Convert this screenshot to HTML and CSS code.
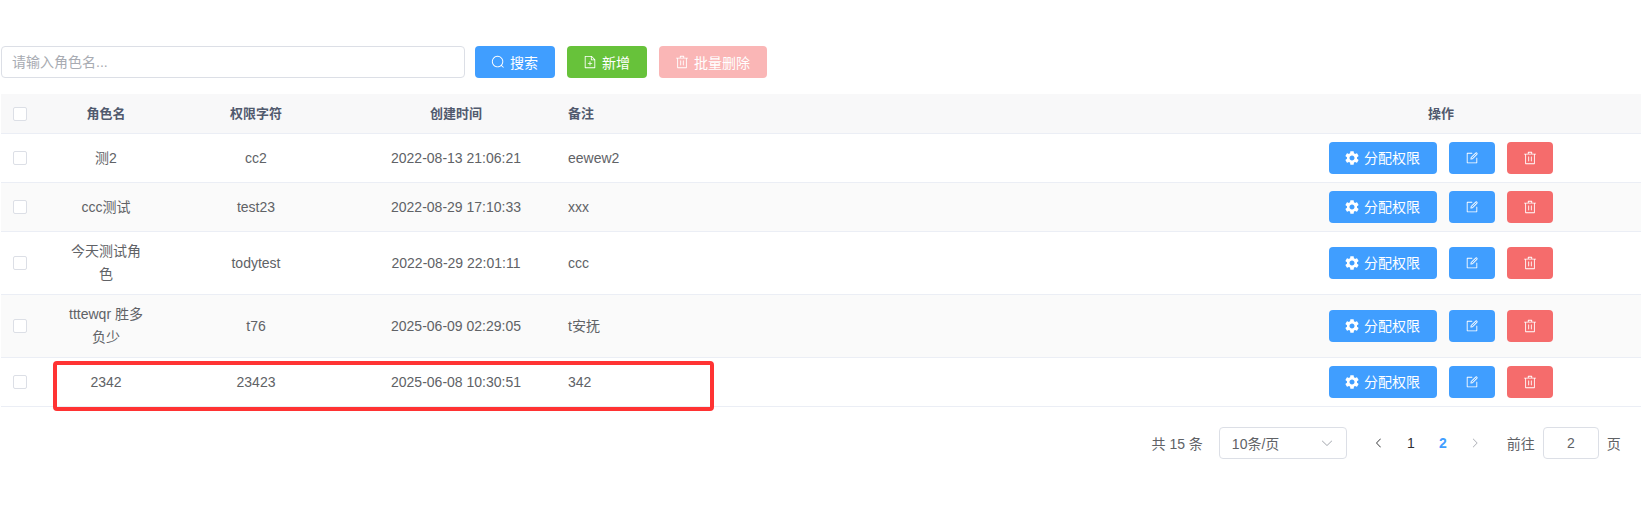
FILE: index.html
```html
<!DOCTYPE html>
<html lang="zh">
<head>
<meta charset="utf-8">
<title>角色管理</title>
<link rel="stylesheet" href="styles.css">
</head>
<body>
<svg class="sprite" aria-hidden="true">
  <symbol id="i-search" viewBox="0 0 1024 1024"><path d="m795.904 750.72 124.992 124.928a32 32 0 0 1-45.248 45.248L750.656 795.904a416 416 0 1 1 45.248-45.248zM480 832a352 352 0 1 0 0-704 352 352 0 0 0 0 704z"/></symbol>
  <symbol id="i-add" viewBox="0 0 1024 1024"><path d="M832 384H576V128H192v768h640V384zm-26.496-64L640 154.496V320h165.504zM160 64h480l256 256v608a32 32 0 0 1-32 32H160a32 32 0 0 1-32-32V96a32 32 0 0 1 32-32zm320 512V448h64v128h128v64H544v128h-64V640H352v-64h128z"/></symbol>
  <symbol id="i-trash" viewBox="0 0 1024 1024"><path d="M160 256H96a32 32 0 0 1 0-64h256V95.936a32 32 0 0 1 32-32h256a32 32 0 0 1 32 32V192h256a32 32 0 1 1 0 64h-64v672a32 32 0 0 1-32 32H192a32 32 0 0 1-32-32V256zm448-64v-64H416v64h192zM224 896h576V256H224v640zm192-128a32 32 0 0 1-32-32V416a32 32 0 0 1 64 0v320a32 32 0 0 1-32 32zm192 0a32 32 0 0 1-32-32V416a32 32 0 0 1 64 0v320a32 32 0 0 1-32 32z"/></symbol>
  <symbol id="i-edit" viewBox="0 0 1024 1024"><path d="M832 512a32 32 0 1 1 64 0v352a32 32 0 0 1-32 32H160a32 32 0 0 1-32-32V160a32 32 0 0 1 32-32h352a32 32 0 0 1 0 64H192v640h640V512z"/><path d="m469.952 554.24 52.8-7.552L847.104 222.4a32 32 0 1 0-45.248-45.248L477.44 501.44l-7.552 52.8zm422.4-422.4a96 96 0 0 1 0 135.808l-331.84 331.84a32 32 0 0 1-18.112 9.088L436.8 623.68a32 32 0 0 1-36.224-36.224l15.104-105.6a32 32 0 0 1 9.024-18.112l331.904-331.84a96 96 0 0 1 135.744 0z"/></symbol>
  <symbol id="i-gear" viewBox="2 2 20 20"><path d="M19.14 12.94c.04-.3.06-.61.06-.94 0-.32-.02-.64-.07-.94l2.03-1.58c.18-.14.23-.41.12-.61l-1.92-3.32c-.12-.22-.37-.29-.59-.22l-2.39.96c-.5-.38-1.03-.7-1.62-.94l-.36-2.54c-.04-.24-.24-.41-.48-.41h-3.84c-.24 0-.43.17-.47.41l-.36 2.54c-.59.24-1.13.57-1.62.94l-2.39-.96c-.22-.08-.47 0-.59.22L2.74 8.87c-.12.21-.08.47.12.61l2.03 1.58c-.05.3-.09.63-.09.94s.02.64.07.94l-2.03 1.58c-.18.14-.23.41-.12.61l1.92 3.32c.12.22.37.29.59.22l2.39-.96c.5.38 1.03.7 1.62.94l.36 2.54c.05.24.24.41.48.41h3.84c.24 0 .44-.17.47-.41l.36-2.54c.59-.24 1.13-.56 1.62-.94l2.39.96c.22.08.47 0 .59-.22l1.92-3.32c.12-.22.07-.47-.12-.61l-2.01-1.58zM12 15.6c-1.98 0-3.6-1.62-3.6-3.6s1.62-3.6 3.6-3.6 3.6 1.62 3.6 3.6-1.62 3.6-3.6 3.6z"/></symbol>
</svg>
<main class="page">
  <div class="toolbar">
    <input class="search-input" type="text" placeholder="请输入角色名...">
    <button class="btn btn-primary with-text"><svg class="icon"><use href="#i-search"/></svg>搜索</button>
    <button class="btn btn-success with-text"><svg class="icon"><use href="#i-add"/></svg>新增</button>
    <button class="btn btn-danger-off with-text"><svg class="icon"><use href="#i-trash"/></svg>批量删除</button>
  </div>

  <div class="table-wrap">
    <table class="table">
      <colgroup>
        <col class="col-check"><col class="col-name"><col class="col-key"><col class="col-time"><col class="col-note"><col class="col-action">
      </colgroup>
      <thead>
        <tr>
          <th class="left"><span class="checkbox"></span></th>
          <th>角色名</th><th>权限字符</th><th>创建时间</th><th class="left">备注</th><th>操作</th>
        </tr>
      </thead>
      <tbody>
        <tr>
          <td class="left"><span class="checkbox"></span></td>
          <td>测2</td><td>cc2</td><td>2022-08-13 21:06:21</td><td class="left">eewew2</td>
          <td><div class="actions">
            <button class="btn btn-primary with-text"><svg class="icon"><use href="#i-gear"/></svg>分配权限</button>
            <button class="btn btn-primary"><svg class="icon"><use href="#i-edit"/></svg></button>
            <button class="btn btn-danger"><svg class="icon"><use href="#i-trash"/></svg></button>
          </div></td>
        </tr>
        <tr>
          <td class="left"><span class="checkbox"></span></td>
          <td>ccc测试</td><td>test23</td><td>2022-08-29 17:10:33</td><td class="left">xxx</td>
          <td><div class="actions">
            <button class="btn btn-primary with-text"><svg class="icon"><use href="#i-gear"/></svg>分配权限</button>
            <button class="btn btn-primary"><svg class="icon"><use href="#i-edit"/></svg></button>
            <button class="btn btn-danger"><svg class="icon"><use href="#i-trash"/></svg></button>
          </div></td>
        </tr>
        <tr>
          <td class="left"><span class="checkbox"></span></td>
          <td>今天测试角色</td><td>todytest</td><td>2022-08-29 22:01:11</td><td class="left">ccc</td>
          <td><div class="actions">
            <button class="btn btn-primary with-text"><svg class="icon"><use href="#i-gear"/></svg>分配权限</button>
            <button class="btn btn-primary"><svg class="icon"><use href="#i-edit"/></svg></button>
            <button class="btn btn-danger"><svg class="icon"><use href="#i-trash"/></svg></button>
          </div></td>
        </tr>
        <tr>
          <td class="left"><span class="checkbox"></span></td>
          <td>tttewqr 胜多负少</td><td>t76</td><td>2025-06-09 02:29:05</td><td class="left">t安抚</td>
          <td><div class="actions">
            <button class="btn btn-primary with-text"><svg class="icon"><use href="#i-gear"/></svg>分配权限</button>
            <button class="btn btn-primary"><svg class="icon"><use href="#i-edit"/></svg></button>
            <button class="btn btn-danger"><svg class="icon"><use href="#i-trash"/></svg></button>
          </div></td>
        </tr>
        <tr>
          <td class="left"><span class="checkbox"></span></td>
          <td>2342</td><td>23423</td><td>2025-06-08 10:30:51</td><td class="left">342</td>
          <td><div class="actions">
            <button class="btn btn-primary with-text"><svg class="icon"><use href="#i-gear"/></svg>分配权限</button>
            <button class="btn btn-primary"><svg class="icon"><use href="#i-edit"/></svg></button>
            <button class="btn btn-danger"><svg class="icon"><use href="#i-trash"/></svg></button>
          </div></td>
        </tr>
      </tbody>
    </table>
    <div class="marker"></div>
  </div>

  <div class="pagination">
    <span class="total">共 15 条</span>
    <div class="select"><span>10条/页</span><svg class="chev" viewBox="0 0 1024 1024"><path d="M831.872 340.864 512 652.672 192.128 340.864a30.592 30.592 0 0 0-42.752 0 29.12 29.12 0 0 0 0 41.6L489.664 714.24a32 32 0 0 0 44.672 0l340.288-331.712a29.12 29.12 0 0 0 0-41.728 30.592 30.592 0 0 0-42.752 0z"/></svg></div>
    <div class="pager">
      <span class="page-btn"><svg class="arrow" viewBox="0 0 1024 1024"><path d="M609.408 149.376 277.76 489.6a32 32 0 0 0 0 44.672l331.648 340.352a29.12 29.12 0 0 0 41.728 0 30.592 30.592 0 0 0 0-42.752L339.264 511.936l311.872-319.872a30.592 30.592 0 0 0 0-42.688 29.12 29.12 0 0 0-41.728 0z"/></svg></span>
      <span class="page-btn">1</span>
      <span class="page-btn active">2</span>
      <span class="page-btn off"><svg class="arrow" viewBox="0 0 1024 1024"><path d="M340.864 149.312a30.592 30.592 0 0 0 0 42.752L652.736 512 340.864 831.872a30.592 30.592 0 0 0 0 42.752 29.12 29.12 0 0 0 41.728 0L714.24 534.336a32 32 0 0 0 0-44.672L382.592 149.376a29.12 29.12 0 0 0-41.728 0z"/></svg></span>
    </div>
    <div class="jumper">
      <span>前往</span>
      <input class="jump-input" type="text" value="2">
      <span>页</span>
    </div>
  </div>
</main>
</body>
</html>
```
FILE: styles.css
```css
* { box-sizing: border-box; }
html, body { margin: 0; background: #fff; }
body {
  font-family: "Liberation Sans", "Noto Sans CJK SC", sans-serif;
  font-size: 14px;
  color: #606266;
}
.sprite { display: none; }
.page { padding: 46px 4px 0 1px; }

.toolbar { display: flex; align-items: center; gap: 12px; height: 32px; }
.search-input {
  width: 464px; height: 32px; margin-right: -2px;
  padding: 0 10px;
  border: 1px solid #dcdfe6; border-radius: 4px;
  font: inherit; color: #606266; outline: none;
}
.search-input::placeholder { color: #a8abb2; }
.btn {
  display: inline-flex; align-items: center; justify-content: center;
  height: 32px; padding: 0 16px;
  border: 0; border-radius: 4px;
  font: inherit; color: #fff; white-space: nowrap;
}
.with-text { padding-right: 17px; }
.icon { width: 14px; height: 14px; fill: currentColor; flex: none; }
.with-text .icon { margin-right: 5px; }
.btn-primary { background: #409eff; }
.btn-success { background: #67c23a; }
.btn-danger { background: #f56c6c; }
.btn-danger-off { background: #fab6b6; }

.table-wrap { position: relative; margin-top: 16px; }
.table { width: 1640px; table-layout: fixed; border-collapse: separate; border-spacing: 0; }
.col-check { width: 55px; }
.col-name { width: 100px; }
.col-key { width: 200px; }
.col-time { width: 200px; }
.col-note { width: 685px; }
.col-action { width: 400px; }
.table th, .table td {
  padding: 8px 12px;
  line-height: 23px;
  text-align: center;
  border-bottom: 1px solid #ebeef5;
  word-break: break-word;
}
.table th { background: #f8f8f9; font-size: 13px; font-weight: 700; color: #515a6e; }
.table tbody tr:nth-child(even) td { background: #fafafa; }
.table .left { text-align: left; }
.checkbox {
  display: block; width: 14px; height: 14px;
  background: #fff; border: 1px solid #dcdfe6; border-radius: 2px;
}
.actions { display: flex; justify-content: center; gap: 12px; }
.marker {
  position: absolute; left: 52px; top: 267px;
  width: 661px; height: 50px;
  border: 4px solid #f33; border-radius: 4px;
  pointer-events: none;
}

.pagination { display: flex; align-items: center; height: 32px; margin-top: 20px; padding-left: 1150.5px; white-space: nowrap; }
.total { margin-right: 16px; }
.select {
  display: flex; align-items: center; justify-content: space-between;
  width: 128px; height: 32px; padding: 0 12px;
  border: 1px solid #dcdfe6; border-radius: 4px;
}
.chev { width: 14px; height: 14px; fill: #a8abb2; }
.pager { display: flex; margin-left: 16px; }
.page-btn {
  display: flex; align-items: center; justify-content: center;
  width: 32px; height: 32px; color: #303133;
}
.page-btn.active { color: #409eff; font-weight: 700; }
.page-btn.off { color: #a8abb2; }
.arrow { width: 12px; height: 12px; fill: currentColor; }
.jumper { display: flex; align-items: center; gap: 8px; margin-left: 16px; }
.jump-input {
  width: 56px; height: 32px; padding: 0;
  border: 1px solid #dcdfe6; border-radius: 4px;
  font: inherit; color: #606266; text-align: center; outline: none;
}
```
